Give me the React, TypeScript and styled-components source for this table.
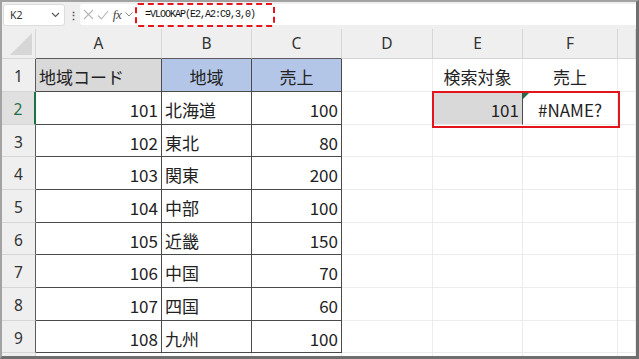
import React from "react";
import styled, { createGlobalStyle } from "styled-components";

const Global = createGlobalStyle`
  html, body { margin: 0; padding: 0; background: #fff; }
  * { box-sizing: border-box; }
`;

const JP = `"Noto Sans CJK JP", "Noto Sans", sans-serif`;

const Frame = styled.div`
  width: 639px;
  height: 359px;
  border-top: 2px solid #a3a3a3;
  border-left: 2px solid #a3a3a3;
  border-right: 3px solid #6f6f6f;
  border-bottom: 3px solid #6f6f6f;
  background: #fff;
  display: flex;
  flex-direction: column;
  overflow: hidden;
  font-family: ${JP};
`;

const Toolbar = styled.div`
  height: 27px;
  flex: none;
  background: #efefef;
  display: flex;
  align-items: center;
  padding: 0 0 2px 1px;
`;

const NameBox = styled.div`
  width: 62px;
  height: 22px;
  background: #fff;
  border: 1px solid #dcdcdc;
  border-radius: 3px;
  display: flex;
  align-items: center;
  justify-content: space-between;
  padding: 0 4px 0 6px;
  font-family: "Noto Sans", sans-serif;
  font-size: 10.5px;
  color: #333;
`;

const Dots = styled.div`
  width: 14px;
  display: flex;
  justify-content: center;
  color: #555;
  font-size: 11px;
  font-weight: bold;
  margin-left: 1px;
`;

const FormulaBar = styled.div`
  flex: 1;
  height: 21px;
  background: #fff;
  border-radius: 3px 0 0 3px;
  display: flex;
  align-items: center;
  padding-left: 2px;
`;

const IconSlot = styled.div<{ $w: number }>`
  width: ${(p) => p.$w}px;
  display: flex;
  align-items: center;
  justify-content: center;
`;

const Fx = styled.span`
  font-family: "Liberation Serif", serif;
  font-style: italic;
  font-size: 13px;
  color: #444;
  letter-spacing: -0.5px;
`;

const FormulaBox = styled.div`
  margin-left: 2px;
  width: 140px;
  height: 24px;
  border: 2px dashed #e5151b;
  border-radius: 3px;
  display: flex;
  align-items: center;
  padding-left: 8px;
  font-family: "Liberation Mono", monospace;
  font-size: 10px;
  letter-spacing: -1px;
  color: #111;
  white-space: nowrap;
`;

const Sheet = styled.div`
  position: relative;
  flex: 1;
  display: grid;
  grid-template-columns: 34px 126px 90px 90px 91px 90px 95px 1fr;
  grid-template-rows: 30px 33px 33px 32px 33px 33px 32px 33px 33px 32px 20px;
  background: #fff;
`;

const Corner = styled.div`
  background: #efefef;
  border-right: 1px solid #d6d6d6;
  border-bottom: 1px solid #d6d6d6;
  position: relative;
  &::after {
    content: "";
    position: absolute;
    right: 3px;
    bottom: 3px;
    width: 0;
    height: 0;
    border-left: 22px solid transparent;
    border-bottom: 22px solid #d6d6d6;
  }
`;

const ColHead = styled.div<{ $dark?: boolean }>`
  background: #efefef;
  border-right: 1px solid #d6d6d6;
  border-bottom: 1px solid ${(p) => (p.$dark ? "#5a5a5a" : "#d6d6d6")};
  display: flex;
  align-items: center;
  justify-content: center;
  font-family: "Noto Sans", sans-serif;
  font-size: 15.5px;
  color: #333;
  padding-bottom: 2px;
`;

const RowHead = styled.div<{ $active?: boolean; $dark?: boolean }>`
  background: ${(p) => (p.$active ? "#e0e0e0" : "#efefef")};
  border-right: ${(p) =>
    p.$active ? "2px solid #1e7145" : `1px solid ${p.$dark ? "#5a5a5a" : "#d6d6d6"}`};
  border-bottom: 1px solid #d6d6d6;
  display: flex;
  align-items: center;
  justify-content: center;
  font-family: "Noto Sans", sans-serif;
  font-size: 15.5px;
  color: ${(p) => (p.$active ? "#1e7145" : "#333")};
  padding-top: 2px;
`;

const Cell = styled.div<{
  $align?: "left" | "right" | "center";
  $fill?: string;
  $boxR?: boolean;
  $boxB?: boolean;
}>`
  background: ${(p) => p.$fill || "#fff"};
  border-right: 1px solid ${(p) => (p.$boxR ? "#4a4a4a" : "#ececec")};
  border-bottom: 1px solid ${(p) => (p.$boxB ? "#4a4a4a" : "#ececec")};
  display: flex;
  align-items: center;
  justify-content: ${(p) =>
    p.$align === "right" ? "flex-end" : p.$align === "center" ? "center" : "flex-start"};
  padding: 3px 3px 0 3px;
  font-size: 17px;
  color: #222;
  white-space: nowrap;
  position: relative;
`;

const ErrorMark = styled.div`
  position: absolute;
  left: 0;
  top: 0;
  width: 0;
  height: 0;
  border-top: 7px solid #1e7145;
  border-right: 7px solid transparent;
`;

const RedBox = styled.div`
  position: absolute;
  left: 430px;
  top: 62px;
  width: 188px;
  height: 37px;
  border: 2px solid #e3141b;
  pointer-events: none;
`;

const cols = ["A", "B", "C", "D", "E", "F", ""];

const data: [string, string, string][] = [
  ["101", "北海道", "100"],
  ["102", "東北", "80"],
  ["103", "関東", "200"],
  ["104", "中部", "100"],
  ["105", "近畿", "150"],
  ["106", "中国", "70"],
  ["107", "四国", "60"],
  ["108", "九州", "100"],
];

const Chevron = () => (
  <svg width="9" height="6" viewBox="0 0 9 6">
    <path d="M1 1 L4.5 4.5 L8 1" fill="none" stroke="#555" strokeWidth="1.1" />
  </svg>
);

export default function App() {
  const rows: React.ReactNode[] = [];

  rows.push(<Corner key="corner" />);
  cols.forEach((c, i) => rows.push(<ColHead key={"h" + i} $dark={i < 3}>{c}</ColHead>));

  rows.push(<RowHead key="r1" $dark>1</RowHead>);
  rows.push(
    <Cell key="1A" $fill="#d9d9d9" $boxR $boxB>
      地域コード
    </Cell>
  );
  rows.push(
    <Cell key="1B" $fill="#b4c6e7" $align="center" $boxR $boxB>
      地域
    </Cell>
  );
  rows.push(
    <Cell key="1C" $fill="#b4c6e7" $align="center" $boxR $boxB>
      売上
    </Cell>
  );
  rows.push(<Cell key="1D" />);
  rows.push(
    <Cell key="1E" $align="center">
      検索対象
    </Cell>
  );
  rows.push(
    <Cell key="1F" $align="center">
      売上
    </Cell>
  );
  rows.push(<Cell key="1G" />);

  data.forEach((d, i) => {
    const r = i + 2;
    rows.push(
      <RowHead key={"r" + r} $active={r === 2} $dark>
        {r}
      </RowHead>
    );
    rows.push(
      <Cell key={r + "A"} $align="right" $boxR $boxB>
        {d[0]}
      </Cell>
    );
    rows.push(
      <Cell key={r + "B"} $boxR $boxB>
        {d[1]}
      </Cell>
    );
    rows.push(
      <Cell key={r + "C"} $align="right" $boxR $boxB>
        {d[2]}
      </Cell>
    );
    rows.push(<Cell key={r + "D"} />);
    if (r === 2) {
      rows.push(
        <Cell key="2E" $align="right" $fill="#d9d9d9" $boxR>
          101
        </Cell>
      );
      rows.push(
        <Cell key="2F" $align="center">
          <ErrorMark />
          #NAME?
        </Cell>
      );
    } else {
      rows.push(<Cell key={r + "E"} />);
      rows.push(<Cell key={r + "F"} />);
    }
    rows.push(<Cell key={r + "G"} />);
  });

  rows.push(<RowHead key="r10" />);
  for (let i = 0; i < 7; i++) rows.push(<Cell key={"10" + i} />);

  return (
    <>
      <Global />
      <Frame>
        <Toolbar>
          <NameBox>
            <span>K2</span>
            <Chevron />
          </NameBox>
          <Dots>⋮</Dots>
          <FormulaBar>
            <IconSlot $w={13}>
              <svg width="11" height="11" viewBox="0 0 11 11">
                <path d="M1 1 L10 10 M10 1 L1 10" stroke="#b5b5b5" strokeWidth="1.1" fill="none" />
              </svg>
            </IconSlot>
            <IconSlot $w={15}>
              <svg width="12" height="10" viewBox="0 0 12 10">
                <path d="M1 5.5 L4.5 9 L11 1" stroke="#b5b5b5" strokeWidth="1.1" fill="none" />
              </svg>
            </IconSlot>
            <IconSlot $w={14}>
              <Fx>fx</Fx>
            </IconSlot>
            <IconSlot $w={9}>
              <svg width="8" height="5" viewBox="0 0 8 5">
                <path d="M0.5 0.5 L4 4 L7.5 0.5" fill="none" stroke="#888" strokeWidth="1" />
              </svg>
            </IconSlot>
            <FormulaBox>=VLOOKAP(E2,A2:C9,3,0)</FormulaBox>
          </FormulaBar>
        </Toolbar>
        <Sheet>
          {rows}
          <RedBox />
        </Sheet>
      </Frame>
    </>
  );
}
